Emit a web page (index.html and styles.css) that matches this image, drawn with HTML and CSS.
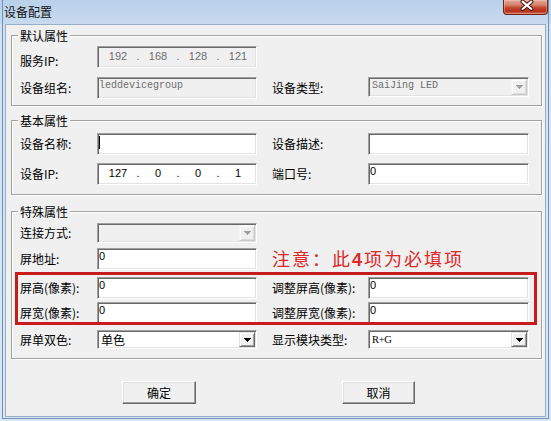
FILE: index.html
```html
<!DOCTYPE html>
<html lang="zh-CN">
<head>
<meta charset="utf-8">
<title>设备配置</title>
<link rel="stylesheet" href="styles.css">
</head>
<body>
<div class="window">
  <div class="frame">
    <div class="titlebar">
      <span class="title">设备配置</span>
      <span class="close" aria-label="关闭">
        <svg width="45" height="15" viewBox="0 0 45 15">
          <path d="M20 1.5 L29 9 M29 1.5 L20 9" stroke="#4a160c" stroke-width="4.2" stroke-linecap="round" fill="none"/>
          <path d="M20 1.5 L29 9 M29 1.5 L20 9" stroke="#ffffff" stroke-width="2.2" stroke-linecap="round" fill="none"/>
        </svg>
      </span>
    </div>

    <div class="client">
      <!-- 默认属性 -->
      <div class="group g1">
        <span class="legend">默认属性</span>
        <div class="row">
          <span class="lbl lbl-low">服务IP:</span>
          <div class="ip sunken off">
            <span class="oct">192</span><span class="dot">.</span><span class="oct">168</span><span class="dot">.</span><span class="oct">128</span><span class="dot">.</span><span class="oct">121</span>
          </div>
        </div>
        <div class="row mt9">
          <span class="lbl">设备组名:</span>
          <div class="edit sunken off mono">leddevicegroup</div>
          <span class="lbl lbl-r">设备类型:</span>
          <div class="combo sunken off wide top h20">
            <span class="combo-text mono">SaiJing LED</span>
            <span class="drop drop-off"><svg width="7" height="4" viewBox="0 0 7 4"><path d="M0 0H7L3.5 4Z" fill="#a0a0a0"/></svg></span>
          </div>
        </div>
      </div>

      <!-- 基本属性 -->
      <div class="group g2">
        <span class="legend">基本属性</span>
        <div class="row">
          <span class="lbl">设备名称:</span>
          <div class="edit sunken"><span class="caret"></span></div>
          <span class="lbl lbl-r">设备描述:</span>
          <div class="edit sunken wide"></div>
        </div>
        <div class="row mt8">
          <span class="lbl">设备IP:</span>
          <div class="ip sunken">
            <span class="oct">127</span><span class="dot">.</span><span class="oct">0</span><span class="dot">.</span><span class="oct">0</span><span class="dot">.</span><span class="oct">1</span>
          </div>
          <span class="lbl lbl-r">端口号:</span>
          <div class="edit sunken wide">0</div>
        </div>
      </div>

      <!-- 特殊属性 -->
      <div class="group g3">
        <span class="legend">特殊属性</span>
        <div class="row">
          <span class="lbl">连接方式:</span>
          <div class="combo sunken off h20">
            <span class="combo-text"></span>
            <span class="drop drop-off"><svg width="7" height="4" viewBox="0 0 7 4"><path d="M0 0H7L3.5 4Z" fill="#a0a0a0"/></svg></span>
          </div>
        </div>
        <div class="row mt4">
          <span class="lbl">屏地址:</span>
          <div class="edit sunken">0</div>
          <span class="note">注意：此<b>4</b>项为必填项</span>
        </div>
        <div class="row mt6">
          <span class="lbl">屏高(像素):</span>
          <div class="edit sunken">0</div>
          <span class="lbl lbl-r">调整屏高(像素):</span>
          <div class="edit sunken wide">0</div>
        </div>
        <div class="row mt3">
          <span class="lbl">屏宽(像素):</span>
          <div class="edit sunken">0</div>
          <span class="lbl lbl-r">调整屏宽(像素):</span>
          <div class="edit sunken wide">0</div>
        </div>
        <div class="row mt6">
          <span class="lbl">屏单双色:</span>
          <div class="combo sunken h19">
            <span class="combo-text cjk">单色</span>
            <span class="drop"><svg width="7" height="4" viewBox="0 0 7 4"><path d="M0 0H7L3.5 4Z" fill="#000"/></svg></span>
          </div>
          <span class="lbl lbl-r">显示模块类型:</span>
          <div class="combo sunken wide h19">
            <span class="combo-text serif">R+G</span>
            <span class="drop"><svg width="7" height="4" viewBox="0 0 7 4"><path d="M0 0H7L3.5 4Z" fill="#000"/></svg></span>
          </div>
        </div>
        <!-- required-fields highlight around the two size rows -->
        <div class="required"></div>
      </div>

      <div class="buttons">
        <button class="btn" type="button">确定</button>
        <button class="btn" type="button">取消</button>
      </div>
    </div>
  </div>
</div>
</body>
</html>
```

FILE: styles.css
```css
html, body {
  margin: 0;
  padding: 0;
}

body {
  width: 551px;
  height: 421px;
  overflow: hidden;
  font-family: "Noto Sans CJK SC", sans-serif;
  font-size: 12px;
  color: #000;
}

/* window frame */
.window {
  width: 551px;
  height: 421px;
  box-sizing: border-box;
  padding: 0 2px 2px 2px;
  background: linear-gradient(to bottom, #b9d1ea 0, #c8daef 24px, #d3e2f2 24px, #dae6f4 100%);
}

.frame {
  height: 419px;
  box-sizing: border-box;
  border: 1px solid #6f91b8;
  border-top: none;
  display: flex;
  flex-direction: column;
}

.titlebar {
  height: 24px;
  flex: none;
  display: flex;
  align-items: flex-start;
}

.title {
  align-self: center;
  padding-left: 1px;
  font-size: 12px;
  line-height: 14px;
  color: #111;
}

.close {
  margin-left: auto;
  width: 45px;
  height: 15px;
  box-sizing: border-box;
  border: 1px solid #6b2418;
  border-top: none;
  border-radius: 0 0 4px 4px;
  background: linear-gradient(to bottom, #e2a596 0, #d7826d 35%, #c2452b 55%, #b8321d 80%, #cf6a4d 100%);
  box-shadow: inset 0 0 0 1px rgba(255, 220, 210, 0.35);
  display: flex;
  overflow: hidden;
}

.close svg {
  display: block;
  margin-left: -1px;
}

/* client area */
.client {
  flex: 1;
  margin: 0 2px 1px 2px;
  background: #f0f0f0;
  border: 1px solid #97aecb;
  display: flex;
  flex-direction: column;
}

/* group boxes with etched border */
.group {
  position: relative;
  margin-left: 5px;
  width: 531px;
  box-sizing: border-box;
  border: 1px solid #a0a0a0;
  box-shadow: inset 1px 1px 0 #fff, 1px 1px 0 #fff;
  padding-left: 8px;
}

.g1 {
  margin-top: 10px;
  padding-top: 10px;
  padding-bottom: 6px;
}

.g2 {
  margin-top: 14px;
  padding-top: 12px;
  padding-bottom: 9px;
}

.g3 {
  margin-top: 16px;
  padding-top: 11px;
  padding-bottom: 9px;
}

.legend {
  position: absolute;
  top: -7px;
  left: 6px;
  padding: 0 2px;
  background: #f0f0f0;
  line-height: 14px;
}

.row {
  display: flex;
  align-items: center;
}

.mt3 { margin-top: 3px; }
.mt4 { margin-top: 4px; }
.mt6 { margin-top: 6px; }
.mt8 { margin-top: 8px; }
.mt9 { margin-top: 9px; }

.lbl {
  width: 77px;
  flex: none;
  line-height: 14px;
  white-space: nowrap;
}

.lbl-low {
  margin-top: 7px;
}

.lbl-r {
  width: 96px;
  margin-left: 15px;
}

/* sunken 3D field border */
.sunken {
  box-sizing: border-box;
  border: 1px solid;
  border-color: #a0a0a0 #fff #fff #a0a0a0;
  box-shadow: inset 1px 1px 0 #696969, inset -1px -1px 0 #e3e3e3;
  background: #fff;
}

.sunken.off {
  background: #f0f0f0;
  color: #6d6d6d;
}

.edit {
  width: 160px;
  height: 22px;
  flex: none;
  padding: 1px 1px 0 1px;
  font-family: "Liberation Sans", sans-serif;
  font-size: 11px;
  line-height: 12px;
}

.wide {
  width: 161px;
}

.mono {
  font-family: "Liberation Mono", monospace;
  font-size: 10px;
  line-height: 12px;
  padding-top: 2px;
}

.caret {
  display: block;
  width: 1px;
  height: 13px;
  margin-top: 1px;
  background: #000;
}

/* IP address control */
.ip {
  width: 160px;
  height: 22px;
  flex: none;
  display: flex;
  padding: 3px 0 0 5px;
  font-family: "Liberation Sans", sans-serif;
  font-size: 11px;
  line-height: 12px;
}

.oct {
  width: 30px;
  text-align: center;
}

.dot {
  width: 10px;
  text-align: center;
}

/* drop-down list */
.combo {
  width: 160px;
  flex: none;
  display: flex;
  padding: 1px;
}

.combo.wide {
  width: 161px;
}

.h20 { height: 20px; }
.h19 { height: 19px; }

.top {
  align-self: flex-start;
}

.combo-text {
  flex: 1;
  padding: 1px 2px 0 2px;
  line-height: 12px;
  white-space: nowrap;
  overflow: hidden;
}

.combo-text.cjk {
  font-family: "Noto Sans CJK SC", sans-serif;
  font-size: 12px;
  line-height: 14px;
  padding: 1px 2px 0 2px;
}

.combo-text.serif {
  font-family: "Liberation Serif", serif;
  font-size: 10.5px;
  letter-spacing: -0.3px;
  line-height: 12px;
  padding: 2px 2px 0 2px;
}

.drop {
  width: 16px;
  flex: none;
  box-sizing: border-box;
  display: flex;
  align-items: center;
  justify-content: center;
  background: #f0f0f0;
  border: 1px solid;
  border-color: #e3e3e3 #696969 #696969 #e3e3e3;
  box-shadow: inset 1px 1px 0 #fff, inset -1px -1px 0 #a0a0a0;
}

.drop svg {
  display: block;
  shape-rendering: crispEdges;
}

.drop-off {
  border-color: #f4f4f4 #c8c8c8 #c8c8c8 #f4f4f4;
  box-shadow: inset 1px 1px 0 #fff, inset -1px -1px 0 #dcdcdc;
}

.note {
  margin-left: 15px;
  font-family: "Noto Sans CJK SC", sans-serif;
  font-size: 18px;
  line-height: 22px;
  letter-spacing: 2px;
  color: #dc2828;
  white-space: nowrap;
}

.note b {
  font-family: "Liberation Sans", sans-serif;
  font-weight: bold;
}

/* red frame marking the mandatory rows */
.required {
  position: absolute;
  left: 3px;
  top: 60px;
  width: 522px;
  height: 53px;
  box-sizing: border-box;
  border: 3px solid #c81c1c;
  pointer-events: none;
}

/* push buttons */
.buttons {
  display: flex;
  margin-top: 22px;
  padding-left: 116px;
  gap: 146px;
}

.btn {
  width: 74px;
  height: 23px;
  margin: 0;
  padding: 0;
  box-sizing: border-box;
  font-family: "Noto Sans CJK SC", sans-serif;
  font-size: 12px;
  line-height: 14px;
  color: #000;
  background: #f0f0f0;
  border: 1px solid;
  border-color: #fff #696969 #696969 #fff;
  box-shadow: inset -1px -1px 0 #a0a0a0, inset 1px 1px 0 #e3e3e3;
  border-radius: 0;
}

.btn + .btn {
  width: 73px;
}
```
